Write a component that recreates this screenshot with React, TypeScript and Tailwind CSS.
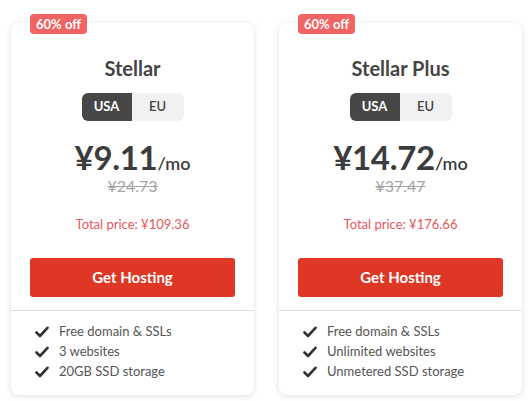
import React from 'react';

type Plan = {
  name: string;
  price: string;
  oldPrice: string;
  total: string;
  features: string[];
};

const plans: Plan[] = [
  {
    name: 'Stellar',
    price: '¥9.11',
    oldPrice: '¥24.73',
    total: '¥109.36',
    features: ['Free domain & SSLs', '3 websites', '20GB SSD storage'],
  },
  {
    name: 'Stellar Plus',
    price: '¥14.72',
    oldPrice: '¥37.47',
    total: '¥176.66',
    features: ['Free domain & SSLs', 'Unlimited websites', 'Unmetered SSD storage'],
  },
];

const Check = () => (
  <svg width="14" height="12" viewBox="0 0 14 12" className="shrink-0">
    <path d="M1.5 6.5 L5 10 L12.5 1.8" fill="none" stroke="#333" strokeWidth="2.6" strokeLinecap="round" strokeLinejoin="round" />
  </svg>
);

const PlanCard: React.FC<{ plan: Plan }> = ({ plan }) => (
  <div className="relative w-[243px] h-[372px] bg-white rounded-lg shadow-[0_1px_6px_rgba(0,0,0,0.13)] flex flex-col">
    <span className="absolute left-[19px] -top-[9px] h-[20px] px-[6px] rounded-[4px] bg-[#f26363] text-white text-[13px] font-bold leading-[20px]">
      60% off
    </span>
    <div className="flex flex-col items-center pt-[32px]">
      <h2 className="text-[20px] font-bold leading-[26px] text-[#444]">{plan.name}</h2>
      <div className="mt-[12px] flex h-[28px] rounded-[6px] overflow-hidden text-[13px] font-bold">
        <span className="w-[50px] bg-[#474747] text-white flex items-center justify-center">USA</span>
        <span className="w-[52px] bg-[#f1f1f1] text-[#444] font-semibold flex items-center justify-center">EU</span>
      </div>
      <div className="mt-[22px] flex items-baseline text-[#3c3c3c] leading-[28px]">
        <span className="text-[33px] font-bold tracking-[-0.3px]">{plan.price}</span>
        <span className="text-[18px] font-semibold">/mo</span>
      </div>
      <span className="text-[16px] leading-[18px] text-[#a5a5a5] line-through">{plan.oldPrice}</span>
      <p className="mt-[19px] text-[13px] leading-[20px] text-[#e5585c]">Total price: {plan.total}</p>
    </div>
    <div className="px-[19px] mt-[24px]">
      <button
        type="button"
        className="w-full h-[39px] rounded-[3px] bg-[#df3725] text-white text-[15px] font-bold"
      >
        Get Hosting
      </button>
    </div>
    <div className="mt-[13px] border-t border-[#dedede] pt-[11px] pl-[24px] flex flex-col">
      {plan.features.map((f) => (
        <div key={f} className="flex items-center gap-[10px] h-[20px] text-[13px] text-[#555]">
          <Check />
          <span>{f}</span>
        </div>
      ))}
    </div>
  </div>
);

export default function App() {
  return (
    <div
      className="w-[528px] h-[401px] bg-white flex gap-[25px] pl-[11px] pt-[23px]"
      style={{ fontFamily: 'Lato, "Noto Sans", sans-serif' }}
    >
      {plans.map((p) => (
        <PlanCard key={p.name} plan={p} />
      ))}
    </div>
  );
}
